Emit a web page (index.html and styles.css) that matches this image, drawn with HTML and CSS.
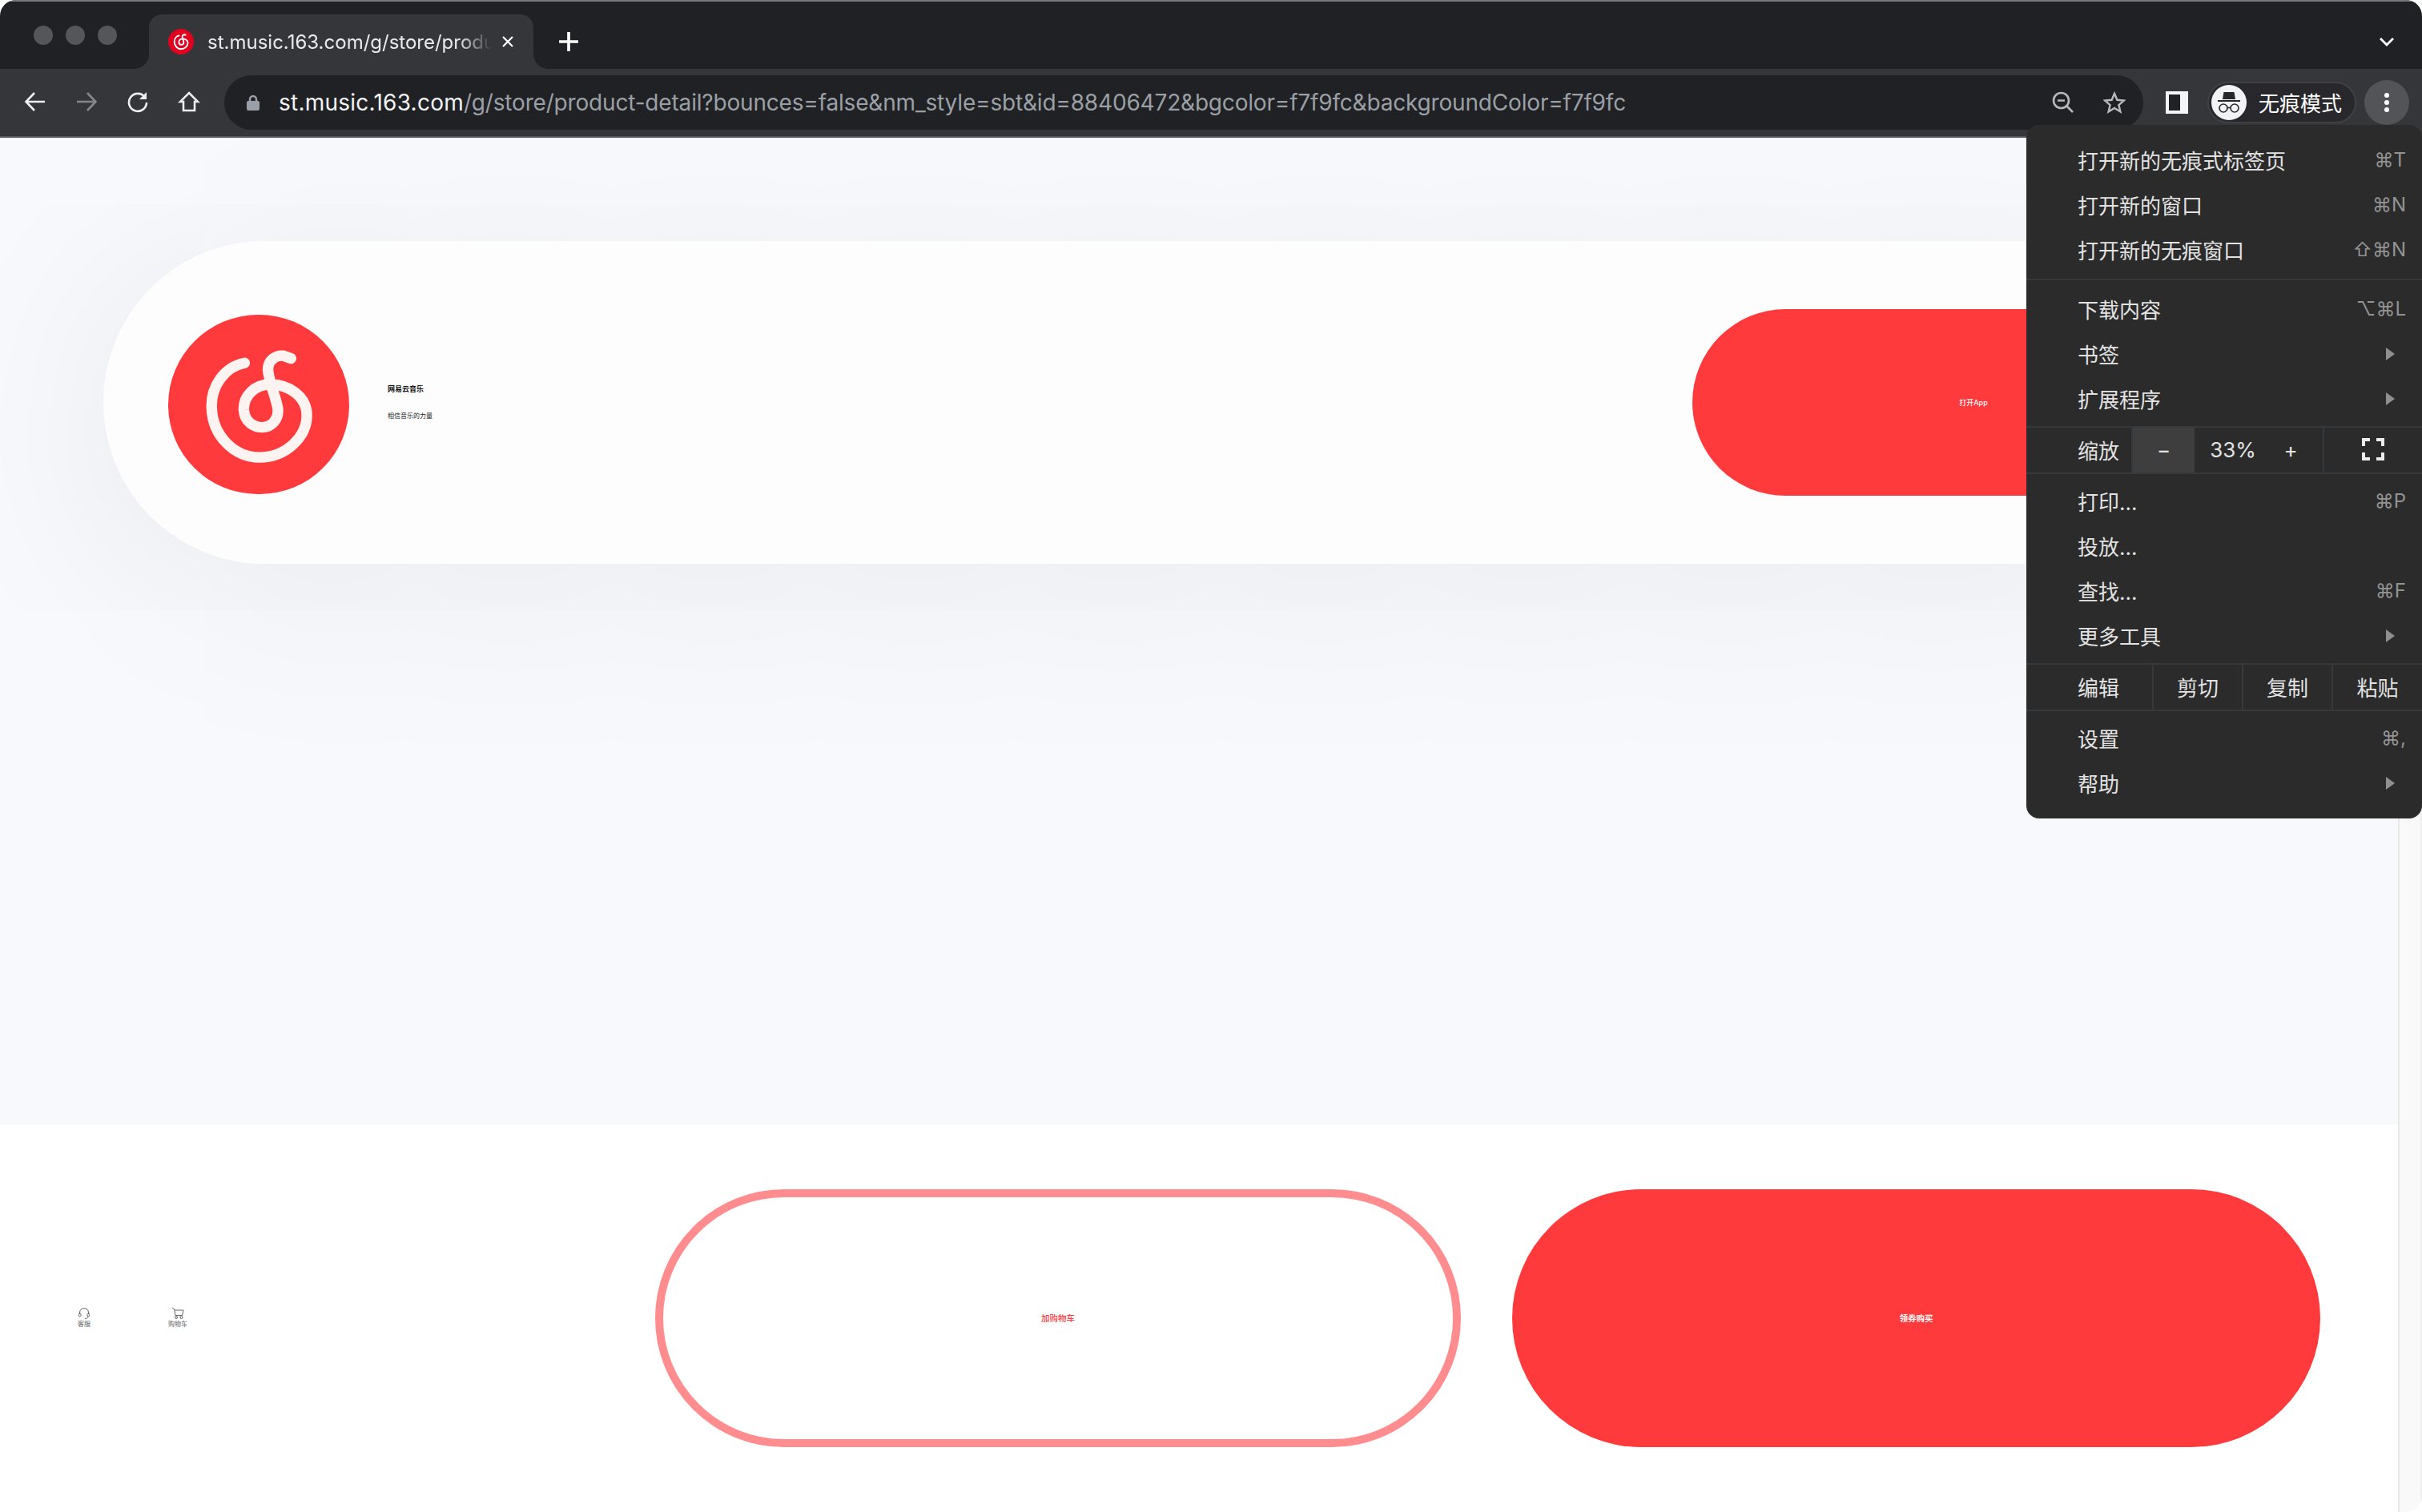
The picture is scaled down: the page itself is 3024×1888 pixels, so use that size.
FILE: index.html
```html
<!DOCTYPE html>
<html lang="zh-CN">
<head>
<meta charset="utf-8">
<title>网易云音乐</title>
<link rel="stylesheet" href="styles.css">
</head>
<body>
<svg class="defs" width="0" height="0" aria-hidden="true">
  <symbol id="swirl" viewBox="90 65 675 675">
    <path d="M375 245C300 260 250 330 252 410C255 520 340 597 430 597C530 597 607 520 607 440C607 370 540 325 470 325C410 325 370 370 372 420C375 465 410 485 440 485C480 485 505 450 498 410C490 370 465 310 462 270C462 235 490 215 520 218L548 228" fill="none" stroke="currentColor" stroke-width="40" stroke-linecap="round" stroke-linejoin="round"/>
  </symbol>
</svg>
<div class="window">
  <header class="titlebar">
    <div class="lights"><span class="light"></span><span class="light"></span><span class="light"></span></div>
    <div class="tab">
      <span class="favicon"><svg class="favicon-mark"><use href="#swirl"/></svg></span>
      <span class="tab-title">st.music.163.com/g/store/produ</span>
      <svg class="tab-close" viewBox="0 0 16 16"><path d="M2 2L14 14M14 2L2 14"/></svg>
    </div>
    <svg class="new-tab" viewBox="0 0 24 24"><path d="M12 1V23M1 12H23"/></svg>
    <svg class="tab-list" viewBox="0 0 20 14"><path d="M2 3L10 11L18 3"/></svg>
  </header>
  <nav class="toolbar">
    <div class="nav-buttons">
      <svg class="nav-icon" viewBox="0 0 28 28"><path d="M26 14H3M13 3L2.500 14L13 25"/></svg>
      <svg class="nav-icon dim" viewBox="0 0 28 28"><path d="M2 14H25M15 3L25.500 14L15 25"/></svg>
      <svg class="nav-icon" viewBox="0 0 28 28"><path d="M23 8.500A11 11 0 1 0 25 15"/><path class="solid" d="M25 2V11H16Z"/></svg>
      <svg class="nav-icon" viewBox="0 0 28 28"><path d="M14 3L25 14H21V25H7V14H3Z"/></svg>
    </div>
    <div class="omnibox">
      <svg class="lock" viewBox="0 0 16 20"><path class="lock-shackle" d="M4 9V6A4 4 0 0 1 12 6V9"/><rect class="lock-body" x="0" y="8" width="16" height="12" rx="2"/></svg>
      <div class="url"><span class="url-host">st.music.163.com</span><span class="url-rest">/g/store/product-detail?bounces=false&amp;nm_style=sbt&amp;id=88406472&amp;bgcolor=f7f9fc&amp;backgroundColor=f7f9fc</span></div>
      <svg class="omni-icon" viewBox="0 0 28 28"><circle cx="11.500" cy="11.500" r="9.500"/><path d="M7 11.500H16M18.500 18.500L26 26"/></svg>
      <svg class="omni-icon" viewBox="0 0 30 30"><path d="M15 3L18.600 11.500L27.800 12.300L20.800 18.300L22.900 27.300L15 22.500L7.100 27.300L9.200 18.300L2.200 12.300L11.400 11.500Z"/></svg>
    </div>
    <svg class="side-panel" viewBox="0 0 28 28"><rect class="side-frame" width="28" height="28"/><rect class="side-hole" x="4" y="4" width="14" height="20"/></svg>
    <div class="profile">
      <svg class="incognito" viewBox="0 0 44 44"><circle class="inc-bg" cx="22" cy="22" r="22"/><path class="inc-hat" d="M15.500 9H28.500L30 18H14Z"/><path class="inc-brim" d="M8 20H36"/><circle class="inc-lens" cx="15" cy="29" r="5"/><circle class="inc-lens" cx="29" cy="29" r="5"/><path class="inc-lens" d="M20 28.500H24"/></svg>
      <span class="profile-name">无痕模式</span>
    </div>
    <div class="more"><span class="dot"></span><span class="dot"></span><span class="dot"></span></div>
  </nav>
  <div class="viewport">
    <main class="page">
      <section class="hero">
        <div class="card">
          <div class="app-logo"><svg class="app-mark"><use href="#swirl"/></svg></div>
          <div class="app-info">
            <div class="app-name">网易云音乐</div>
            <div class="app-slogan">相信音乐的力量</div>
          </div>
          <div class="open-app">打开App</div>
        </div>
      </section>
      <footer class="actions">
        <div class="shortcut shortcut-service">
          <svg class="shortcut-icon" viewBox="0 0 16 16"><path d="M2.500 9V7A5.500 5.500 0 0 1 13.500 7V9"/><rect x="1.500" y="8" width="2.500" height="4" rx="1.200"/><rect x="12" y="8" width="2.500" height="4" rx="1.200"/><path d="M13 12C12.500 14 11 14.500 9 14.500"/></svg>
          <span class="shortcut-label">客服</span>
        </div>
        <div class="shortcut shortcut-cart">
          <svg class="shortcut-icon" viewBox="0 0 16 16"><path d="M1 1L3.500 2.500L5 10.500H13.500L15 4H4"/><circle cx="6" cy="13" r="1.500"/><circle cx="12.500" cy="13" r="1.500"/></svg>
          <span class="shortcut-label">购物车</span>
        </div>
        <div class="btn btn-outline">加购物车</div>
        <div class="btn btn-solid">领券购买</div>
      </footer>
    </main>
    <div class="scrollbar"></div>
  </div>
  <aside class="menu">
    <div class="menu-group group-first">
      <div class="menu-row"><span>打开新的无痕式标签页</span><span class="key">⌘T</span></div>
      <div class="menu-row"><span>打开新的窗口</span><span class="key">⌘N</span></div>
      <div class="menu-row"><span>打开新的无痕窗口</span><span class="key">⇧⌘N</span></div>
    </div>
    <div class="sep"></div>
    <div class="menu-group group-second">
      <div class="menu-row"><span>下载内容</span><span class="key">⌥⌘L</span></div>
      <div class="menu-row"><span>书签</span><span class="caret"></span></div>
      <div class="menu-row"><span>扩展程序</span><span class="caret"></span></div>
    </div>
    <div class="sep"></div>
    <div class="zoom-row">
      <span class="zoom-label">缩放</span>
      <span class="zoom-minus">−</span>
      <span class="zoom-value">33%</span>
      <span class="zoom-plus">+</span>
      <span class="zoom-full"><svg class="full-icon" viewBox="0 0 28 28"><path d="M2 10V2H10M18 2H26V10M26 18V26H18M10 26H2V18"/></svg></span>
    </div>
    <div class="sep"></div>
    <div class="menu-group">
      <div class="menu-row"><span>打印...</span><span class="key">⌘P</span></div>
      <div class="menu-row"><span>投放...</span></div>
      <div class="menu-row"><span>查找...</span><span class="key">⌘F</span></div>
      <div class="menu-row"><span>更多工具</span><span class="caret"></span></div>
    </div>
    <div class="sep"></div>
    <div class="edit-row">
      <span class="edit-label">编辑</span>
      <span class="edit-cell">剪切</span>
      <span class="edit-cell">复制</span>
      <span class="edit-cell">粘贴</span>
    </div>
    <div class="sep"></div>
    <div class="menu-group group-last">
      <div class="menu-row"><span>设置</span><span class="key">⌘,</span></div>
      <div class="menu-row"><span>帮助</span><span class="caret"></span></div>
    </div>
  </aside>
</div>
</body>
</html>
```
FILE: styles.css
```css
* { box-sizing: border-box; }
html, body { margin: 0; height: 100%; background: #fff; overflow: hidden; }
body { font-family: Inter, "Noto Sans CJK SC", sans-serif; }
.defs { position: absolute; }

.window {
  position: relative;
  height: 1888px;
  display: flex;
  flex-direction: column;
  border-radius: 20px;
  overflow: hidden;
  background: #fff;
}

/* title bar */
.titlebar {
  height: 86px;
  flex: none;
  display: flex;
  align-items: flex-end;
  background: #202124;
  border-top: 2px solid #77787a;
  padding-left: 186px;
  position: relative;
}
.lights {
  position: absolute;
  left: 42px;
  top: 30px;
  display: flex;
  gap: 16px;
}
.light { width: 24px; height: 24px; border-radius: 50%; background: #55565a; }
.tab {
  width: 480px;
  height: 68px;
  background: #35363a;
  border-radius: 16px 16px 0 0;
  display: flex;
  align-items: center;
  padding: 0 22px 0 24px;
  position: relative;
}
.tab::before, .tab::after {
  content: "";
  position: absolute;
  bottom: 0;
  width: 18px;
  height: 18px;
}
.tab::before { left: -18px; background: radial-gradient(circle at 0 0, transparent 17.500px, #35363a 18px); }
.tab::after { right: -18px; background: radial-gradient(circle at 100% 0, transparent 17.500px, #35363a 18px); }
.favicon {
  width: 32px;
  height: 32px;
  flex: none;
  border-radius: 50%;
  background: #e2001f;
  color: #fff;
  display: flex;
  align-items: center;
  justify-content: center;
}
.favicon-mark { width: 32px; height: 32px; }
.tab-title {
  margin-left: 17px;
  width: 355px;
  flex: none;
  white-space: nowrap;
  font-size: 24px;
  color: #e8eaed;
  -webkit-mask-image: linear-gradient(90deg, #000 88%, transparent 100%);
  mask-image: linear-gradient(90deg, #000 88%, transparent 100%);
}
.tab-close { width: 16px; height: 16px; margin-left: 12px; flex: none; fill: none; stroke: #fff; stroke-width: 2.200; }
.new-tab { width: 26px; height: 26px; margin: 0 0 21px 31px; fill: none; stroke: #fff; stroke-width: 3.400; }
.tab-list { width: 20px; height: 14px; margin: 0 34px 27px auto; fill: none; stroke: #fff; stroke-width: 2.800; }

/* toolbar */
.toolbar {
  height: 86px;
  flex: none;
  display: flex;
  align-items: flex-start;
  background: #35363a;
  border-bottom: 2px solid #58595c;
  position: relative;
}
.nav-buttons { display: flex; gap: 36px; padding: 27px 0 0 30px; width: 280px; }
.nav-icon { width: 28px; height: 28px; flex: none; fill: none; stroke: #eceef0; stroke-width: 2.600; }
.nav-icon.dim { stroke: #85868a; }
.nav-icon .solid { fill: #eceef0; stroke: none; }
.omnibox {
  width: 2396px;
  height: 68px;
  margin-top: 8px;
  flex: none;
  background: #202124;
  border-radius: 34px;
  display: flex;
  align-items: center;
  padding-left: 28px;
  padding-right: 22px;
}
.lock { width: 16px; height: 20px; flex: none; fill: none; }
.lock-shackle { stroke: #9aa0a6; stroke-width: 2.500; }
.lock-body { fill: #9aa0a6; }
.url { margin-left: 24px; flex: 1; white-space: nowrap; font-size: 28px; }
.url-host { color: #f1f3f4; letter-spacing: .24px; }
.url-rest { color: #9aa0a6; letter-spacing: -.18px; }
.omni-icon { width: 28px; height: 30px; flex: none; margin-left: 36px; fill: none; stroke: #b8b8ba; stroke-width: 2.600; }
.side-panel { width: 28px; height: 28px; flex: none; margin: 28px 0 0 28px; }
.side-frame { fill: #f4f5f8; }
.side-hole { fill: #202124; }
.profile {
  width: 186px;
  height: 52px;
  margin: 16px 0 0 24px;
  flex: none;
  border-radius: 26px;
  background: #28282c;
  border: 2px solid #3f4044;
  display: flex;
  align-items: center;
  padding-left: 3px;
}
.incognito { width: 44px; height: 44px; flex: none; }
.inc-bg { fill: #f1f3f4; }
.inc-hat { fill: #28282c; }
.inc-brim { fill: none; stroke: #28282c; stroke-width: 2; }
.inc-lens { fill: none; stroke: #28282c; stroke-width: 1.600; }
.profile-name { margin-left: 15px; padding-bottom: 2px; font-size: 26px; color: #fff; white-space: nowrap; }
.more {
  width: 56px;
  height: 56px;
  margin: 14px 0 0 10px;
  flex: none;
  border-radius: 50%;
  background: #535457;
  display: flex;
  flex-direction: column;
  align-items: center;
  justify-content: center;
  gap: 3px;
}
.dot { width: 6px; height: 6px; border-radius: 50%; background: #fff; }

/* page */
.viewport { flex: 1; display: flex; min-height: 0; }
.page { flex: 1; display: flex; flex-direction: column; min-width: 0; background: #f8f9fc; }
.hero { flex: 1; padding: 129px 129px 0; overflow: hidden; }
.card {
  height: 403px;
  border-radius: 202px;
  background: #fdfdfe;
  box-shadow: 0 28px 260px rgba(0, 0, 0, .08);
  display: flex;
  align-items: center;
  padding: 0 50px 0 81px;
  position: relative;
}
.app-logo {
  width: 226px;
  height: 224px;
  margin-top: 4px;
  flex: none;
  border-radius: 113px 113px 112px 112px;
  background: #fe3a3c;
  color: #fdf3f1;
  overflow: hidden;
}
.app-mark { display: block; width: 226px; height: 226px; }
.app-info { margin-left: 48px; flex: 1; }
.app-name { font-size: 9px; line-height: 12px; font-weight: 700; color: #111; }
.app-slogan { margin-top: 21px; font-size: 8px; line-height: 12px; color: #222; }
.open-app {
  width: 702px;
  height: 233px;
  flex: none;
  margin-top: -1px;
  border-radius: 117px;
  background: #ff3a3c;
  color: #fff;
  font-size: 9px;
  font-weight: 500;
  display: flex;
  align-items: center;
  justify-content: center;
}

.actions {
  height: 484px;
  flex: none;
  background: #fff;
  display: flex;
  align-items: center;
  position: relative;
}
.shortcut { display: flex; flex-direction: column; align-items: center; flex: none; margin-top: -2px; }
.shortcut-service { width: 16px; margin-left: 97px; }
.shortcut-cart { width: 24px; margin-left: 97px; }
.shortcut-icon { width: 16px; height: 16px; fill: none; stroke: #666; stroke-width: 1; }
.shortcut-label { font-size: 8px; line-height: 11px; color: #666; white-space: nowrap; }
.btn {
  width: 1006px;
  height: 322px;
  flex: none;
  border-radius: 161px;
  display: flex;
  align-items: center;
  justify-content: center;
  font-size: 10.500px;
  padding-bottom: 2px;
}
.btn-outline { margin-left: 584px; border: 10px solid #ff8d8f; color: #ff3a3c; font-weight: 500; }
.btn-solid { width: 1009px; margin-left: 64px; background: #ff3a3c; color: #fff; font-weight: 700; }

.scrollbar {
  width: 30px;
  flex: none;
  background: #f9f9f9;
  border-left: 2px solid #e8e8e8;
  border-right: 2px solid #efefef;
}

/* menu overlay */
.menu {
  position: absolute;
  left: 2530px;
  top: 156px;
  width: 494px;
  background: #2b2b2b;
  border-radius: 16px;
  color: #e3e3e3;
  font-size: 26px;
}
.menu-group { padding: 6px 0; }
.group-first { padding: 16px 0 8px; }
.group-second { padding: 8px 0 6px; }
.group-last { padding: 6px 0 16px; }
.menu-row {
  height: 56px;
  display: flex;
  align-items: center;
  justify-content: space-between;
  padding: 0 20px 2px 64px;
  white-space: nowrap;
}
.key { font-size: 24px; color: #939393; font-family: Inter, "DejaVu Sans", sans-serif; }
.caret {
  width: 0;
  height: 0;
  margin: 2px 14px 0 0;
  border-left: 11px solid #8f8f8f;
  border-top: 8.500px solid transparent;
  border-bottom: 8.500px solid transparent;
}
.sep { height: 2px; background: #35393b; }
.zoom-row, .edit-row { height: 56px; display: flex; align-items: stretch; }
.zoom-row > span, .edit-row > span { display: flex; align-items: center; justify-content: center; flex: none; padding-bottom: 2px; }
.zoom-label { width: 133px; padding-left: 64px; justify-content: flex-start !important; border-right: 2px solid #35393b; }
.zoom-minus { width: 77px; background: #3e3e3e; }
.zoom-value { width: 96px; }
.zoom-plus { width: 64px; padding-right: 16px; }
.zoom-full { width: 124px; border-left: 2px solid #35393b; }
.full-icon { width: 28px; height: 28px; fill: none; stroke: #ececec; stroke-width: 4; }
.edit-label { width: 159px; padding-left: 64px; justify-content: flex-start !important; border-right: 2px solid #35393b; }
.edit-cell { width: 112px; border-right: 2px solid #35393b; }
.edit-cell:last-child { width: 111px; border-right: 0; }
```
